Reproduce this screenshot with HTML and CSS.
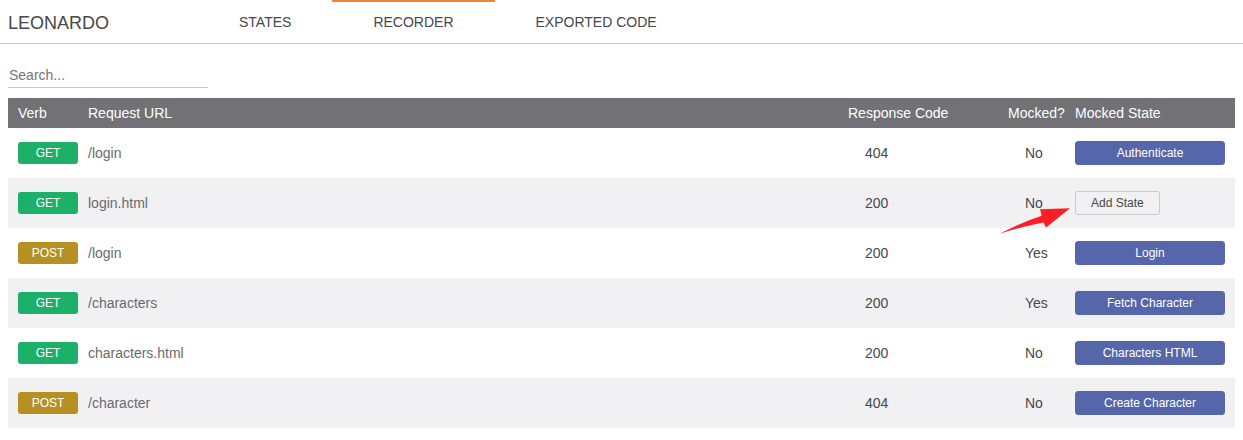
FILE: index.html
```html
<!DOCTYPE html>
<html lang="en">
<head>
<meta charset="utf-8">
<title>Leonardo</title>
<link rel="stylesheet" href="styles.css">
</head>
<body>
<header class="header">
  <h1 class="brand">LEONARDO</h1>
  <nav class="tabs">
    <a class="tab" href="#states">STATES</a>
    <a class="tab tab-active" href="#recorder" aria-current="page">RECORDER</a>
    <a class="tab" href="#exported">EXPORTED CODE</a>
  </nav>
</header>
<main class="content">
  <input class="search" type="text" placeholder="Search..." aria-label="Search">
  <table class="requests">
    <thead>
      <tr>
        <th class="col-verb" scope="col">Verb</th>
        <th class="col-url" scope="col">Request URL</th>
        <th class="col-code" scope="col">Response Code</th>
        <th class="col-mocked" scope="col">Mocked?</th>
        <th class="col-state" scope="col">Mocked State</th>
      </tr>
    </thead>
    <tbody>
      <tr>
        <td class="verb-cell"><span class="verb verb-get">GET</span></td>
        <td class="url">/login</td><td class="value">404</td><td class="value">No</td>
        <td class="state"><button class="btn btn-state" type="button">Authenticate</button></td>
      </tr>
      <tr>
        <td class="verb-cell"><span class="verb verb-get">GET</span></td>
        <td class="url">login.html</td><td class="value">200</td><td class="value">No</td>
        <td class="state">
          <button class="btn btn-add" type="button">Add State</button>
          <svg class="pointer" viewBox="0 0 72 28" aria-hidden="true"><path d="M72 1.2 L42 2.2 L43.6 8.8 Q22 16 1 27 Q22 20 45.5 15.6 L48 20.6 Z" fill="#ff1d25"/></svg>
        </td>
      </tr>
      <tr>
        <td class="verb-cell"><span class="verb verb-post">POST</span></td>
        <td class="url">/login</td><td class="value">200</td><td class="value">Yes</td>
        <td class="state"><button class="btn btn-state" type="button">Login</button></td>
      </tr>
      <tr>
        <td class="verb-cell"><span class="verb verb-get">GET</span></td>
        <td class="url">/characters</td><td class="value">200</td><td class="value">Yes</td>
        <td class="state"><button class="btn btn-state" type="button">Fetch Character</button></td>
      </tr>
      <tr>
        <td class="verb-cell"><span class="verb verb-get">GET</span></td>
        <td class="url">characters.html</td><td class="value">200</td><td class="value">No</td>
        <td class="state"><button class="btn btn-state" type="button">Characters HTML</button></td>
      </tr>
      <tr>
        <td class="verb-cell"><span class="verb verb-post">POST</span></td>
        <td class="url">/character</td><td class="value">404</td><td class="value">No</td>
        <td class="state"><button class="btn btn-state" type="button">Create Character</button></td>
      </tr>
    </tbody>
  </table>
</main>
</body>
</html>
```
FILE: styles.css
```css
* {
  box-sizing: border-box;
}

body {
  margin: 0;
  background: #fff;
  color: #47474c;
  font-family: "Liberation Sans", Arial, sans-serif;
  font-size: 14px;
  line-height: 20px;
}

.header {
  display: flex;
  align-items: center;
  border-bottom: 1px solid #c9c9c9;
}

.brand {
  flex: 0 0 198px;
  margin: 0;
  padding: 2px 8px 0;
  font-size: 18px;
  font-weight: 400;
  line-height: 20px;
}

.tabs {
  display: flex;
}

.tab {
  padding: 10px 41px 11px;
  border-top: 2px solid transparent;
  color: inherit;
  text-decoration: none;
}

.tab-active {
  border-top-color: #f08537;
}

.content {
  padding: 20px 8px;
}

.search {
  display: block;
  width: 200px;
  height: 24px;
  margin-bottom: 10px;
  padding: 0 1px 2px;
  border: 0;
  border-bottom: 1px solid #c9c9c9;
  outline: 0;
  background: transparent;
  color: inherit;
  font: inherit;
}

.search::placeholder {
  color: #757575;
}

.requests {
  width: 100%;
  border-collapse: collapse;
  table-layout: fixed;
}

.requests th {
  height: 30px;
  padding: 0;
  background: #727176;
  color: #fff;
  font-weight: 400;
  text-align: left;
  white-space: nowrap;
}

.requests td {
  height: 50px;
  padding: 0;
}

.requests tbody tr:nth-child(even) {
  background: #f1f1f3;
}

.requests .col-verb {
  width: 80px;
  padding-left: 10px;
}

.col-code {
  width: 160px;
}

.col-mocked {
  width: 67px;
}

.col-state {
  width: 160px;
}

.requests .verb-cell {
  padding: 0 10px;
}

.verb {
  display: block;
  border-radius: 3px;
  color: #fff;
  font-size: 12px;
  line-height: 22px;
  text-align: center;
}

.verb-get {
  background: #1cb068;
}

.verb-post {
  background: #b69122;
}

.url {
  color: #6a6a6e;
}

.requests .value {
  padding-left: 17px;
}

.requests .state {
  position: relative;
  padding-right: 10px;
}

.btn {
  display: block;
  height: 24px;
  padding: 0 15px;
  border: 1px solid #5566aa;
  border-radius: 3px;
  font-family: inherit;
  font-size: 12px;
  line-height: 22px;
}

.btn-state {
  width: 100%;
  background: #5566aa;
  color: #fff;
}

.btn-add {
  border-color: #c9c9c9;
  background: transparent;
  color: inherit;
}

.pointer {
  position: absolute;
  top: 29px;
  right: 165px;
  width: 72px;
  height: 28px;
}
```
